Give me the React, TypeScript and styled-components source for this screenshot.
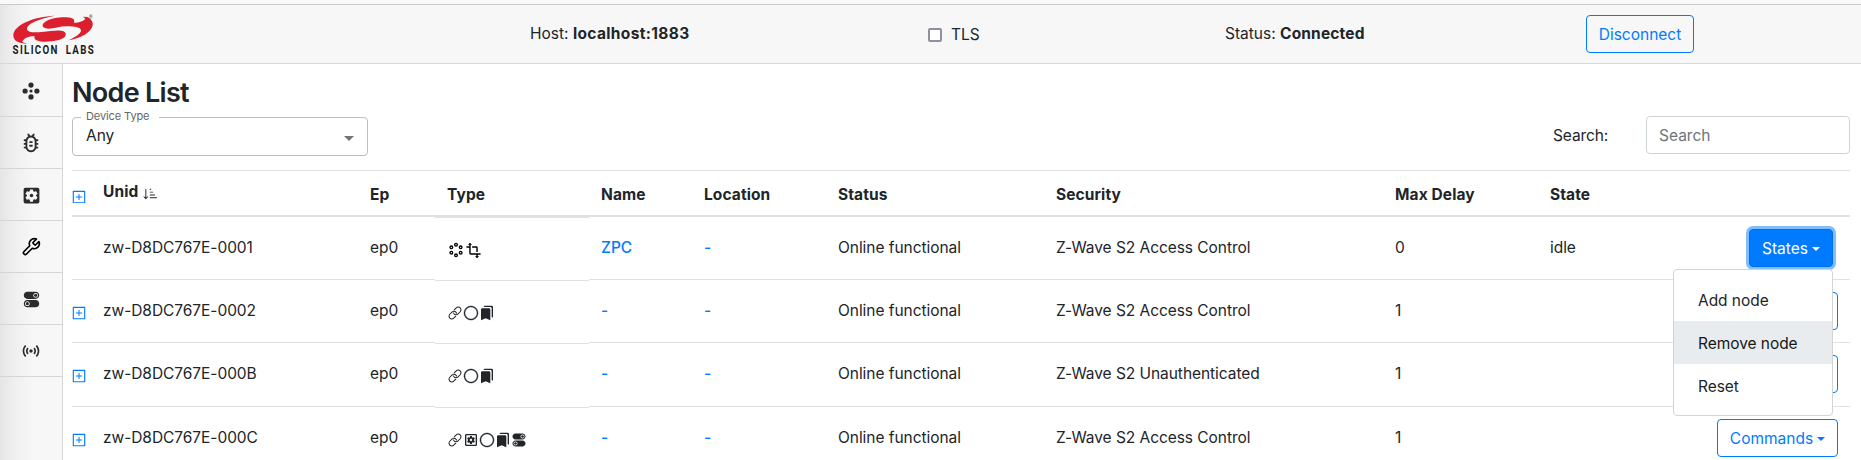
import React from 'react';
import styled, { createGlobalStyle, css } from 'styled-components';
import { CgDebug } from 'react-icons/cg';
import { GrNodes } from 'react-icons/gr';
import { FiTool } from 'react-icons/fi';
import { IoIosLink, IoIosSwitch } from 'react-icons/io';
import { VscCircleLarge } from 'react-icons/vsc';
import { AiOutlinePlusSquare } from 'react-icons/ai';
import { BsSortDownAlt } from 'react-icons/bs';
import {
  MdBookmarks,
  MdOutlineSettingsApplications,
  MdSensors,
  MdSettingsApplications,
  MdTransform,
} from 'react-icons/md';

const GlobalStyle = createGlobalStyle`
  * { box-sizing: border-box; }
  body {
    margin: 0;
    background: #fff;
    color: #212529;
    font: 400 15.5px/24px Inter, "Liberation Sans", sans-serif;
  }
  svg { display: block; flex: none; }
`;

const edgeShade = 'linear-gradient(90deg, #e5e5e5 0, #eeeeee 12px, #f7f7f7 34px)';

const Page = styled.div`
  height: 460px;
  display: flex;
  flex-direction: column;
  overflow: hidden;
`;

const WindowEdge = styled.div`
  height: 5px;
  flex: none;
  background: #f9f9fb;
  border-bottom: 1px solid #cbcbce;
`;

const TopBar = styled.header`
  display: grid;
  grid-template-columns: 530px 397px 298px 361px auto;
  height: 59px;
  flex: none;
  background: ${edgeShade};
  border-bottom: 1px solid #d8d8d8;
`;

const LogoBox = styled.div`
  padding: 9px 0 0 12px;
`;

const BarText = styled.div<{ $spread?: number }>`
  padding-top: 17px;
  white-space: nowrap;
  b {
    font-weight: 700;
    letter-spacing: ${(p) => p.$spread ?? 0}px;
  }
`;

const TlsLabel = styled.label`
  display: flex;
  gap: 9px;
  padding: 18px 0 0 1px;
`;

const CheckBox = styled.input`
  appearance: none;
  width: 14px;
  height: 14px;
  margin: 5px 0 0;
  background: #fff;
  border: 2px solid #8f8f9d;
  border-radius: 2px;
`;

const Button = styled.button<{ $solid?: boolean; $width: number }>`
  display: flex;
  align-items: center;
  justify-content: center;
  gap: 4px;
  width: ${(p) => p.$width}px;
  height: 38px;
  padding: 1px 0 0;
  font: inherit;
  color: #007bff;
  background: transparent;
  border: 1px solid #007bff;
  border-radius: 4px;
  ${(p) =>
    p.$solid &&
    css`
      color: #fff;
      background: #007bff;
      border-color: #006fe6;
      box-shadow: 0 0 0 3px #80bdff;
      margin-right: 5px;
    `}
`;

const ConnectBox = styled.div`
  padding-top: 10px;
`;

const Caret = styled.i`
  border: 4px solid transparent;
  border-top-color: currentColor;
  border-bottom: 0;
`;

const Body = styled.div`
  display: flex;
  flex: 1;
  min-height: 0;
`;

const Sidebar = styled.nav`
  width: 63px;
  flex: none;
  background: ${edgeShade};
  border-right: 1px solid #d8d8d8;
`;

const NavItem = styled.a<{ $dark?: boolean; $first?: boolean }>`
  display: flex;
  align-items: center;
  justify-content: center;
  height: ${(p) => (p.$first ? 53 : 52)}px;
  padding-top: 1px;
  color: ${(p) => (p.$dark ? '#000' : '#2c2c2c')};
  border-bottom: 1px solid #d5d5d5;
`;

const Content = styled.main`
  width: 1787px;
  padding-left: 9px;
  flex: none;
`;

const Title = styled.h3`
  height: 47px;
  margin: 0;
  padding-top: 12px;
  font-size: 27px;
  font-weight: 600;
  line-height: 34px;
  letter-spacing: -0.7px;
`;

const Filters = styled.div`
  display: flex;
  height: 59px;
  padding-top: 5px;
`;

const Select = styled.fieldset`
  display: flex;
  align-items: center;
  justify-content: space-between;
  width: 296px;
  height: 45px;
  margin: -5px auto 0 0;
  padding: 0 13px 7px 13px;
  border: 1px solid #bdbdbd;
  border-radius: 4px;
`;

const Legend = styled.legend`
  margin-left: -5px;
  width: 78px;
  padding: 0 5px;
  height: 12px;
  font-size: 11px;
  line-height: 11px;
  letter-spacing: -0.1px;
  color: #666;
  white-space: nowrap;
`;

const SelectArrow = styled.i`
  margin-top: 6px;
  border: 5px solid transparent;
  border-top-color: #757575;
  border-bottom: 0;
`;

const SearchLabel = styled.label`
  padding-top: 8px;
  width: 93px;
  letter-spacing: -0.1px;
`;

const SearchInput = styled.input`
  width: 204px;
  height: 38px;
  padding: 1px 12px 0;
  font: inherit;
  border: 1px solid #ced4da;
  border-radius: 4px;
  &::placeholder { color: #6c757d; opacity: 1; }
`;

const columns = css`
  display: grid;
  grid-template-columns: 20px 266px 77px 154px 103px 134px 218px 339px 155px 100px 212px;
`;

const HeadRow = styled.div`
  ${columns}
  height: 47px;
  font-weight: 700;
  letter-spacing: 0.1px;
  border-top: 1px solid #dee2e6;
  border-bottom: 2px solid #dee2e6;
`;

const HeadCell = styled.div`
  padding: 12px 0 0 12px;
`;

const UnidHead = styled.div`
  display: flex;
  gap: 5px;
  padding: 9px 0 0 11px;
  svg { margin-top: 6px; }
`;

const HeadExpand = styled.div`
  height: 32px;
  margin-left: -1.5px;
  padding-top: 18px;
  overflow: hidden;
  color: #007bff;
`;

const Row = styled.div<{ $height: number }>`
  ${columns}
  height: ${(p) => p.$height}px;
`;

const Cell = styled.div<{ $first: boolean; $link?: boolean; $inset?: number }>`
  padding: 19px 0 0 ${(p) => p.$inset ?? 12}px;
  border-top: ${(p) => (p.$first ? '0' : '1px solid #dee2e6')};
  color: ${(p) => (p.$link ? '#007bff' : 'inherit')};
  font-weight: ${(p) => (p.$link ? 500 : 400)};
  letter-spacing: -0.05px;
  white-space: nowrap;
`;

const ExpandCell = styled(Cell)`
  padding: 25px 0 0;
  color: #007bff;
  svg { margin-left: -1.5px; }
`;

const TypeCell = styled(Cell)`
  display: flex;
  margin-top: ${(p) => (p.$first ? 0 : 1)}px;
  padding: 24px 0 0 12px;
  border-top: 1px solid #dee2e6;
`;

const IconSlot = styled.span<{ $width?: number; $black?: boolean }>`
  display: flex;
  align-items: center;
  justify-content: center;
  width: ${(p) => p.$width ?? 16}px;
  height: 16px;
  color: ${(p) => (p.$black ? '#000' : 'inherit')};
`;

const ActionCell = styled(Cell)`
  display: flex;
  justify-content: flex-end;
  align-items: flex-start;
  padding: 12px 12px 0 0;
`;

const DropHolder = styled.div`
  position: relative;
`;

const Menu = styled.div`
  position: absolute;
  z-index: 2;
  top: 40px;
  right: 5px;
  width: 160px;
  height: 147px;
  padding: 8px 0;
  background: #fff;
  border: 1px solid #d4d4d4;
  border-radius: 4px;
`;

const MenuItem = styled.div<{ $hover?: boolean }>`
  height: 43px;
  padding: 11px 0 0 24px;
  white-space: nowrap;
  color: ${(p) => (p.$hover ? '#16181b' : '#212529')};
  background: ${(p) => (p.$hover ? '#e9ecef' : 'transparent')};
`;

const LogoWord = styled.text`
  font: 700 12.5px Roboto, sans-serif;
  fill: #1c1c1c;
`;

const LogoMark = styled.text`
  font: 700 4.5px Roboto, sans-serif;
  fill: #444;
`;

function Logo() {
  return (
    <svg width="84" height="43" viewBox="12 14 84 43">
      <g transform="scale(.33333)" fill="#dc1f2e">
        <path d="M165 47C125 55 84 68 81 86C81 97 100 98 125 96C150 93 170 90 183 92C200 94 200 104 193 112C183 122 150 126 130 125C110 124 100 118 104 109C90 108 72 114 67 124L68 127L82 131C55 130 39 122 40 104C42 76 100 49 165 47Z" />
        <path d="M205 121C230 110 243 100 243 91C242 82 225 79 200 79C175 79 155 89 137 85C124 81 126 72 135 66C150 55 180 51 200 52C218 53 226 58 222 68C238 68 252 62 256 56L249 50L262 51C275 57 279 66 278 76C274 98 240 117 205 121Z" />
      </g>
      <LogoMark x="89" y="19">®</LogoMark>
      <g transform="translate(12.6 54.4) scale(.78 1)">
        <LogoWord x="0" y="0" textLength="57.5" lengthAdjust="spacing">SILICON</LogoWord>
        <LogoWord x="68" y="0" textLength="36" lengthAdjust="spacing">LABS</LogoWord>
      </g>
    </svg>
  );
}

function NetworkDots() {
  return (
    <svg width="18" height="18" viewBox="0 0 18 18" fill="currentColor">
      <circle cx="9" cy="3.1" r="2.6" />
      <circle cx="3.1" cy="9" r="2.6" />
      <circle cx="14.9" cy="9" r="2.6" />
      <circle cx="9" cy="14.9" r="2.6" />
      <circle cx="9" cy="9" r="1.6" />
    </svg>
  );
}

type IconName = 'nodes' | 'transform' | 'link' | 'gear' | 'circle' | 'bookmarks' | 'switch';

const typeIcons: Record<IconName, React.ReactNode> = {
  nodes: <IconSlot $width={18} $black><GrNodes size={16} /></IconSlot>,
  transform: <IconSlot $black><MdTransform size={17} /></IconSlot>,
  link: <IconSlot><IoIosLink size={16} /></IconSlot>,
  gear: <IconSlot><MdOutlineSettingsApplications size={16} /></IconSlot>,
  circle: <IconSlot><VscCircleLarge size={16} strokeWidth={0.4} /></IconSlot>,
  bookmarks: <IconSlot><MdBookmarks size={16} /></IconSlot>,
  switch: <IconSlot><IoIosSwitch size={16} /></IconSlot>,
};

interface NodeRow {
  unid: string;
  icons: IconName[];
  name: string;
  security: string;
  delay: string;
  state: string;
  height: number;
}

const nodes: NodeRow[] = [
  { unid: 'zw-D8DC767E-0001', icons: ['nodes', 'transform'], name: 'ZPC', security: 'Z-Wave S2 Access Control', delay: '0', state: 'idle', height: 62 },
  { unid: 'zw-D8DC767E-0002', icons: ['link', 'circle', 'bookmarks'], name: '-', security: 'Z-Wave S2 Access Control', delay: '1', state: '', height: 63 },
  { unid: 'zw-D8DC767E-000B', icons: ['link', 'circle', 'bookmarks'], name: '-', security: 'Z-Wave S2 Unauthenticated', delay: '1', state: '', height: 64 },
  { unid: 'zw-D8DC767E-000C', icons: ['link', 'gear', 'circle', 'bookmarks', 'switch'], name: '-', security: 'Z-Wave S2 Access Control', delay: '1', state: '', height: 63 },
];

function StatesMenu() {
  return (
    <DropHolder>
      <Button $solid $width={84}>States<Caret /></Button>
      <Menu>
        <MenuItem>Add node</MenuItem>
        <MenuItem $hover>Remove node</MenuItem>
        <MenuItem>Reset</MenuItem>
      </Menu>
    </DropHolder>
  );
}

export default function App() {
  return (
    <Page>
      <GlobalStyle />
      <WindowEdge />
      <TopBar>
        <LogoBox><Logo /></LogoBox>
        <BarText $spread={0.35}>Host: <b>localhost:1883</b></BarText>
        <TlsLabel><CheckBox type="checkbox" />TLS</TlsLabel>
        <BarText $spread={0.15}>Status: <b>Connected</b></BarText>
        <ConnectBox><Button $width={108}>Disconnect</Button></ConnectBox>
      </TopBar>
      <Body>
        <Sidebar>
          <NavItem $first><NetworkDots /></NavItem>
          <NavItem><CgDebug size={22} /></NavItem>
          <NavItem><MdSettingsApplications size={21} /></NavItem>
          <NavItem $dark><FiTool size={20} /></NavItem>
          <NavItem><IoIosSwitch size={19} /></NavItem>
          <NavItem><MdSensors size={20} /></NavItem>
        </Sidebar>
        <Content>
          <Title>Node List</Title>
          <Filters>
            <Select>
              <Legend>Device Type</Legend>
              <span>Any</span>
              <SelectArrow />
            </Select>
            <SearchLabel>Search:</SearchLabel>
            <SearchInput placeholder="Search" />
          </Filters>
          <HeadRow>
            <HeadExpand><AiOutlinePlusSquare size={16} /></HeadExpand>
            <UnidHead>Unid<BsSortDownAlt size={15} /></UnidHead>
            {['Ep', 'Type', 'Name', 'Location', 'Status', 'Security', 'Max Delay', 'State'].map((label) => (
              <HeadCell key={label}>{label}</HeadCell>
            ))}
          </HeadRow>
          {nodes.map((node, index) => {
            const first = index === 0;
            return (
              <Row key={node.unid} $height={node.height}>
                <ExpandCell $first={first}>{!first && <AiOutlinePlusSquare size={16} />}</ExpandCell>
                <Cell $first={first} $inset={11}>{node.unid}</Cell>
                <Cell $first={first}>ep0</Cell>
                <TypeCell $first={first}>
                  {node.icons.map((icon) => (
                    <React.Fragment key={icon}>{typeIcons[icon]}</React.Fragment>
                  ))}
                </TypeCell>
                <Cell $first={first} $link>{node.name}</Cell>
                <Cell $first={first} $link>-</Cell>
                <Cell $first={first}>Online functional</Cell>
                <Cell $first={first}>{node.security}</Cell>
                <Cell $first={first}>{node.delay}</Cell>
                <Cell $first={first}>{node.state}</Cell>
                <ActionCell $first={first}>
                  {first ? <StatesMenu /> : <Button $width={121}>Commands<Caret /></Button>}
                </ActionCell>
              </Row>
            );
          })}
        </Content>
      </Body>
    </Page>
  );
}
